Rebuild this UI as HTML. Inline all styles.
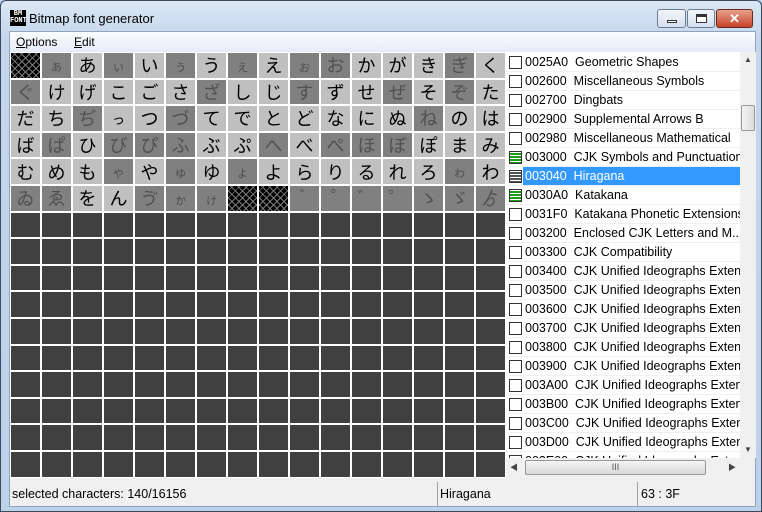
<!DOCTYPE html>
<html><head><meta charset="utf-8"><style>
*{margin:0;padding:0;box-sizing:border-box}
body{width:762px;height:512px;overflow:hidden;background:#b9d1ea;font-family:"Liberation Sans","Noto Sans CJK JP",sans-serif;font-size:12px;position:relative}
.frame{position:absolute;left:0;top:0;width:762px;height:512px;border:1px solid #3c4a5c;border-radius:6px 6px 0 0;background:linear-gradient(#dbe7f4,#c3d6ec 40px,#bcd2ea)}
.title{position:absolute;left:28px;top:10px;font-size:13px;color:#000}
.logo{position:absolute;left:9px;top:9px;width:16px;height:16px;background:#000;color:#fff;font:bold 7px/7px "Liberation Mono",monospace;text-align:center;padding-top:1px}
.btn{position:absolute;top:8px;height:19px;border:1px solid #6d7c90;border-radius:3px;background:linear-gradient(#f2f6fb,#d4e0ee)}
.client{position:absolute;left:8px;top:30px;width:747px;height:476px;background:#f0f0f0;border:1px solid #8ea4bf}
.menu{position:absolute;left:0;top:0;width:745px;height:20px;background:linear-gradient(#fbfcfe,#e4ecf7);font-size:12px}
.menu span{position:absolute;top:3px}
.grid{position:absolute;left:0;top:20px;width:496px;height:426px;background:#fff;display:grid;grid-template-columns:repeat(16,29px);grid-template-rows:repeat(16,24.6px);gap:2px;padding:1px 0 0 1px;overflow:hidden}
.grid div{display:flex;align-items:center;justify-content:center;font-family:"Noto Sans CJK JP",sans-serif;font-size:18px;line-height:1;color:#000;background:#404040;overflow:hidden}
.grid .L{background:#c0c0c0}
.grid .D{background:#808080;color:#505050}
.grid .H{background-color:#000;background-image:repeating-linear-gradient(45deg,transparent 0 4px,#777 4px 5px),repeating-linear-gradient(-45deg,transparent 0 4px,#777 4px 5px)}
.list{position:absolute;left:496px;top:20px;width:234px;height:406px;background:#fff;overflow:hidden}
.item{position:absolute;left:0;height:19px;width:234px;border-bottom:1px solid #f0f0f0;white-space:nowrap;overflow:hidden}
.item .cb{position:absolute;left:3px;top:3px;width:13px;height:13px;border:1px solid #333;background:#fff}
.item .cb.g{background:repeating-linear-gradient(#fff 0 1px,#1a9e1a 1px 3px);border-color:#333}
.item .t{position:absolute;left:19px;top:2px;font-size:12.5px}
.item.sel .t{background:#3399ff;color:#fff;left:17px;padding-left:2px;width:217px;top:0;height:19px;line-height:19px}
.vs{position:absolute;left:730px;top:20px;width:16px;height:406px;background:#f0f0f0}
.hs{position:absolute;left:496px;top:426px;width:234px;height:20px;background:#f0f0f0}
.status{position:absolute;left:0;top:448px;width:745px;height:27px}
.status span{position:absolute;top:7px;font-size:12.5px}
.sep{position:absolute;top:2px;height:24px;border-left:1px solid #a0a0a0}
</style></head><body>
<div class="frame">
<div class="logo">BM<br>FONT</div>
<div class="title">Bitmap font generator</div>
<div class="btn" style="left:656px;width:29px"><div style="position:absolute;left:9px;top:10px;width:10px;height:3px;background:#fff;border:1px solid #333"></div></div>
<div class="btn" style="left:686px;width:28px"><div style="position:absolute;left:8px;top:4px;width:11px;height:9px;border:1px solid #333;border-top-width:3px;background:#fff"></div></div>
<div class="btn" style="left:715px;width:37px;background:linear-gradient(#e8a08c,#c7432a);border-color:#6b2a1f;color:#fff;font-weight:bold;text-align:center;font-size:13px;line-height:17px">✕</div>
<div class="client">
<div class="menu"><span style="left:6px"><u>O</u>ptions</span><span style="left:64px"><u>E</u>dit</span></div>
<div class="grid">
<div class="H"></div><div class="D" style="font-size:13px">ぁ</div><div class="L">あ</div><div class="D" style="font-size:13px">ぃ</div><div class="L">い</div><div class="D" style="font-size:13px">ぅ</div><div class="L">う</div><div class="D" style="font-size:13px">ぇ</div><div class="L">え</div><div class="D" style="font-size:13px">ぉ</div><div class="D">お</div><div class="L">か</div><div class="L">が</div><div class="L">き</div><div class="D">ぎ</div><div class="L">く</div>
<div class="D">ぐ</div><div class="L">け</div><div class="L">げ</div><div class="L">こ</div><div class="L">ご</div><div class="L">さ</div><div class="D">ざ</div><div class="L">し</div><div class="L">じ</div><div class="D">す</div><div class="L">ず</div><div class="L">せ</div><div class="D">ぜ</div><div class="L">そ</div><div class="D">ぞ</div><div class="L">た</div>
<div class="L">だ</div><div class="L">ち</div><div class="D">ぢ</div><div class="L" style="font-size:13px">っ</div><div class="L">つ</div><div class="D">づ</div><div class="L">て</div><div class="L">で</div><div class="L">と</div><div class="L">ど</div><div class="L">な</div><div class="L">に</div><div class="L">ぬ</div><div class="D">ね</div><div class="L">の</div><div class="L">は</div>
<div class="L">ば</div><div class="D">ぱ</div><div class="L">ひ</div><div class="D">び</div><div class="D">ぴ</div><div class="D">ふ</div><div class="L">ぶ</div><div class="L">ぷ</div><div class="D">へ</div><div class="L">べ</div><div class="D">ぺ</div><div class="D">ほ</div><div class="D">ぼ</div><div class="L">ぽ</div><div class="L">ま</div><div class="L">み</div>
<div class="L">む</div><div class="L">め</div><div class="L">も</div><div class="D" style="font-size:13px">ゃ</div><div class="L">や</div><div class="D" style="font-size:13px">ゅ</div><div class="L">ゆ</div><div class="D" style="font-size:13px">ょ</div><div class="L">よ</div><div class="L">ら</div><div class="L">り</div><div class="L">る</div><div class="L">れ</div><div class="L">ろ</div><div class="D" style="font-size:13px">ゎ</div><div class="L">わ</div>
<div class="D">ゐ</div><div class="D">ゑ</div><div class="L">を</div><div class="L">ん</div><div class="D">ゔ</div><div class="D" style="font-size:13px">ゕ</div><div class="D" style="font-size:13px">ゖ</div><div class="H"></div><div class="H"></div><div class="D">゙</div><div class="D">゚</div><div class="D">゛</div><div class="D">゜</div><div class="D">ゝ</div><div class="D">ゞ</div><div class="D">ゟ</div>
<div></div><div></div><div></div><div></div><div></div><div></div><div></div><div></div><div></div><div></div><div></div><div></div><div></div><div></div><div></div><div></div>
<div></div><div></div><div></div><div></div><div></div><div></div><div></div><div></div><div></div><div></div><div></div><div></div><div></div><div></div><div></div><div></div>
<div></div><div></div><div></div><div></div><div></div><div></div><div></div><div></div><div></div><div></div><div></div><div></div><div></div><div></div><div></div><div></div>
<div></div><div></div><div></div><div></div><div></div><div></div><div></div><div></div><div></div><div></div><div></div><div></div><div></div><div></div><div></div><div></div>
<div></div><div></div><div></div><div></div><div></div><div></div><div></div><div></div><div></div><div></div><div></div><div></div><div></div><div></div><div></div><div></div>
<div></div><div></div><div></div><div></div><div></div><div></div><div></div><div></div><div></div><div></div><div></div><div></div><div></div><div></div><div></div><div></div>
<div></div><div></div><div></div><div></div><div></div><div></div><div></div><div></div><div></div><div></div><div></div><div></div><div></div><div></div><div></div><div></div>
<div></div><div></div><div></div><div></div><div></div><div></div><div></div><div></div><div></div><div></div><div></div><div></div><div></div><div></div><div></div><div></div>
<div></div><div></div><div></div><div></div><div></div><div></div><div></div><div></div><div></div><div></div><div></div><div></div><div></div><div></div><div></div><div></div>
<div></div><div></div><div></div><div></div><div></div><div></div><div></div><div></div><div></div><div></div><div></div><div></div><div></div><div></div><div></div><div></div>
</div>
<div class="list">
<div class="item" style="top:1px"><div class="cb"></div><div class="t">0025A0&nbsp; Geometric Shapes</div></div>
<div class="item" style="top:20px"><div class="cb"></div><div class="t">002600&nbsp; Miscellaneous Symbols</div></div>
<div class="item" style="top:39px"><div class="cb"></div><div class="t">002700&nbsp; Dingbats</div></div>
<div class="item" style="top:58px"><div class="cb"></div><div class="t">002900&nbsp; Supplemental Arrows B</div></div>
<div class="item" style="top:77px"><div class="cb"></div><div class="t">002980&nbsp; Miscellaneous Mathematical</div></div>
<div class="item" style="top:96px"><div class="cb g"></div><div class="t">003000&nbsp; CJK Symbols and Punctuation</div></div>
<div class="item sel" style="top:115px"><div class="cb g" style="background:repeating-linear-gradient(#fff 0 1px,#555 1px 3px)"></div><div class="t">003040&nbsp; Hiragana</div></div>
<div class="item" style="top:134px"><div class="cb g"></div><div class="t">0030A0&nbsp; Katakana</div></div>
<div class="item" style="top:153px"><div class="cb"></div><div class="t">0031F0&nbsp; Katakana Phonetic Extensions</div></div>
<div class="item" style="top:172px"><div class="cb"></div><div class="t">003200&nbsp; Enclosed CJK Letters and M...</div></div>
<div class="item" style="top:191px"><div class="cb"></div><div class="t">003300&nbsp; CJK Compatibility</div></div>
<div class="item" style="top:210px"><div class="cb"></div><div class="t">003400&nbsp; CJK Unified Ideographs Extension</div></div>
<div class="item" style="top:229px"><div class="cb"></div><div class="t">003500&nbsp; CJK Unified Ideographs Extension</div></div>
<div class="item" style="top:248px"><div class="cb"></div><div class="t">003600&nbsp; CJK Unified Ideographs Extension</div></div>
<div class="item" style="top:267px"><div class="cb"></div><div class="t">003700&nbsp; CJK Unified Ideographs Extension</div></div>
<div class="item" style="top:286px"><div class="cb"></div><div class="t">003800&nbsp; CJK Unified Ideographs Extension</div></div>
<div class="item" style="top:305px"><div class="cb"></div><div class="t">003900&nbsp; CJK Unified Ideographs Extension</div></div>
<div class="item" style="top:324px"><div class="cb"></div><div class="t">003A00&nbsp; CJK Unified Ideographs Extension</div></div>
<div class="item" style="top:343px"><div class="cb"></div><div class="t">003B00&nbsp; CJK Unified Ideographs Extension</div></div>
<div class="item" style="top:362px"><div class="cb"></div><div class="t">003C00&nbsp; CJK Unified Ideographs Extension</div></div>
<div class="item" style="top:381px"><div class="cb"></div><div class="t">003D00&nbsp; CJK Unified Ideographs Extension</div></div>
<div class="item" style="top:400px"><div class="cb"></div><div class="t">003E00&nbsp; CJK Unified Ideographs Extension</div></div>
</div>
<div class="vs"><div style="position:absolute;left:4px;top:3px;font-size:8px;color:#444">▲</div><div style="position:absolute;left:1px;top:53px;width:14px;height:26px;border:1px solid #999;border-radius:2px;background:linear-gradient(90deg,#f4f4f4,#dcdcdc)"></div><div style="position:absolute;left:4px;top:393px;font-size:8px;color:#444">▼</div></div>
<div class="hs"><div style="position:absolute;left:4px;top:4px;font-size:8px;color:#444">◀</div><div style="position:absolute;left:19px;top:2px;width:181px;height:15px;border:1px solid #999;border-radius:2px;background:linear-gradient(#f4f4f4,#d8d8d8);text-align:center;font-size:9px;line-height:12px;color:#555">III</div><div style="position:absolute;left:222px;top:4px;font-size:8px;color:#444">▶</div></div>
<div class="status">
<span style="left:2px">selected characters: 140/16156</span>
<div class="sep" style="left:427px"></div><span style="left:430px">Hiragana</span>
<div class="sep" style="left:627px"></div><span style="left:631px">63 : 3F</span>
</div>
</div>
</div>
</body></html>
